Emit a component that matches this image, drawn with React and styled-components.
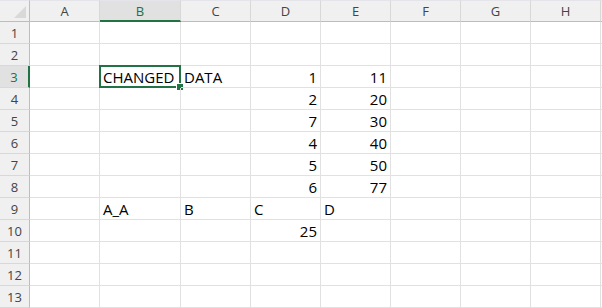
import React from "react";
import styled, { createGlobalStyle } from "styled-components";

const GlobalStyle = createGlobalStyle`
  html, body {
    margin: 0;
    padding: 0;
    background: #ffffff;
    overflow: hidden;
  }
`;

const green = "#217346";

const Sheet = styled.div`
  display: grid;
  grid-template-columns: 30px 70px 81px 70px 70px 70px 70px 70px 70px 1fr;
  grid-template-rows: 22px;
  grid-auto-rows: 22px;
  width: 602px;
  height: 308px;
  overflow: hidden;
  font-family: "Open Sans", "Noto Sans", sans-serif;
`;

const Corner = styled.div`
  display: flex;
  align-items: flex-end;
  justify-content: flex-end;
  padding: 0 3px 3px 0;
  background: #f0f0f0;
  border-top: 1px solid #e4e4ea;
  border-right: 1px solid #bdbdbd;
  border-bottom: 1px solid #bdbdbd;
  box-sizing: border-box;
`;

const ColHeader = styled.div`
  display: flex;
  align-items: center;
  justify-content: center;
  background: ${(p) => (p.$active ? "#e1e1e1" : "#f0f0f0")};
  color: ${(p) => (p.$active ? green : "#444444")};
  font-size: 13px;
  border-top: 1px solid #e4e4ea;
  border-right: 1px solid #d8d8d8;
  border-bottom: ${(p) => (p.$active ? `2px solid ${green}` : "1px solid #bdbdbd")};
  box-sizing: border-box;
`;

const RowHeader = styled.div`
  display: flex;
  align-items: center;
  justify-content: center;
  background: ${(p) => (p.$active ? "#e1e1e1" : "#f0f0f0")};
  color: ${(p) => (p.$active ? green : "#444444")};
  font-size: 13px;
  border-right: ${(p) => (p.$active ? `2px solid ${green}` : "1px solid #bdbdbd")};
  border-bottom: 1px solid #d8d8d8;
  box-sizing: border-box;
`;

const Cell = styled.div`
  position: relative;
  display: flex;
  align-items: center;
  justify-content: ${(p) => (p.$right ? "flex-end" : "flex-start")};
  padding: 1px 3px 0 3px;
  font-size: 15px;
  color: #000000;
  white-space: nowrap;
  border-right: 1px solid #e1e1e1;
  border-bottom: 1px solid #e1e1e1;
  box-sizing: border-box;
`;

const Selection = styled.div`
  position: absolute;
  left: -1px;
  top: -1px;
  right: -1px;
  bottom: -1px;
  border: 2px solid ${green};
  pointer-events: none;
`;

const Handle = styled.div`
  position: absolute;
  right: -5px;
  bottom: -5px;
  width: 6px;
  height: 6px;
  background: ${green};
  border: 1px solid #ffffff;
`;

const columns = ["A", "B", "C", "D", "E", "F", "G", "H", ""];

const data = {
  3: { B: "CHANGED", C: "DATA", D: 1, E: 11 },
  4: { D: 2, E: 20 },
  5: { D: 7, E: 30 },
  6: { D: 4, E: 40 },
  7: { D: 5, E: 50 },
  8: { D: 6, E: 77 },
  9: { B: "A_A", C: "B", D: "C", E: "D" },
  10: { D: 25 },
};

const rows = Array.from({ length: 13 }, (_, i) => i + 1);

export default function App() {
  return (
    <>
      <GlobalStyle />
      <Sheet>
        <Corner>
          <svg width="12" height="12" viewBox="0 0 12 12">
            <polygon points="12,0 12,12 0,12" fill="#d9d9d9" />
          </svg>
        </Corner>
        {columns.map((c, i) => (
          <ColHeader key={"h" + i} $active={c === "B"}>
            {c}
          </ColHeader>
        ))}
        {rows.map((r) => (
          <React.Fragment key={r}>
            <RowHeader $active={r === 3}>{r}</RowHeader>
            {columns.map((c, i) => {
              const value = data[r] && c ? data[r][c] : undefined;
              const selected = r === 3 && c === "B";
              return (
                <Cell key={r + "-" + i} $right={typeof value === "number"}>
                  {value}
                  {selected && (
                    <Selection>
                      <Handle />
                    </Selection>
                  )}
                </Cell>
              );
            })}
          </React.Fragment>
        ))}
      </Sheet>
    </>
  );
}
